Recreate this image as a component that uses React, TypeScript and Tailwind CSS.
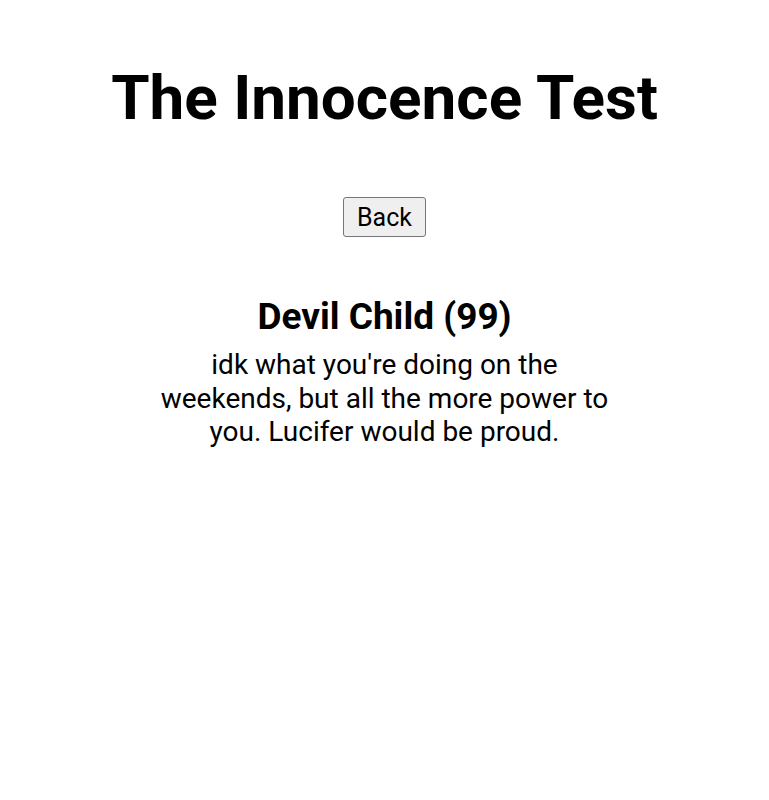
export default function App() {
  return (
    <div className="min-h-[800px] bg-white flex flex-col items-center text-black font-['Roboto',sans-serif]">
      <h1 className="mt-[61px] text-[62px] font-bold leading-[73px]">The Innocence Test</h1>

      <button className="mt-[63px] h-[40px] px-[13px] text-[25px] leading-none bg-[#efefef] border border-[#767676] rounded-[3px]">
        Back
      </button>

      <div className="mt-[58px] flex flex-col items-center text-center">
        <h2 className="text-[37px] font-bold leading-[43px]">Devil Child (99)</h2>
        <p className="mt-[10px] w-[460px] text-[28px] leading-[33.5px]">
          idk what you're doing on the weekends, but all the more power to you. Lucifer would be proud.
        </p>
      </div>
    </div>
  );
}
